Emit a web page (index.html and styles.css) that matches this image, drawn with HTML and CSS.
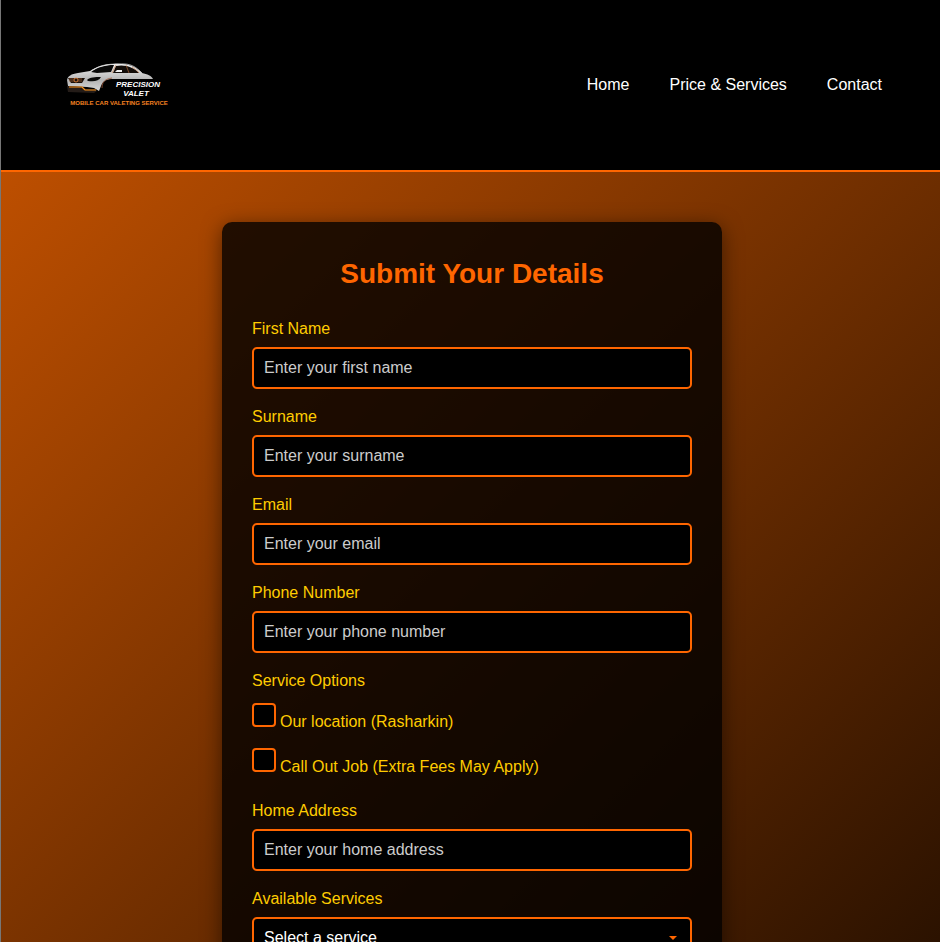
FILE: index.html
```html
<!DOCTYPE html>
<html lang="en">
<head>
<meta charset="utf-8">
<meta name="viewport" content="width=device-width, initial-scale=1">
<title>Precision Valet</title>
<link rel="stylesheet" href="styles.css">
</head>
<body>
<header class="site-header">
  <a class="logo" href="#">
    <svg viewBox="0 0 130 130" role="img" aria-label="Precision Valet">
      <defs>
        <linearGradient id="paint" x1="0" y1="0" x2="0" y2="1">
          <stop offset="0" stop-color="#f4f4f4"/>
          <stop offset=".6" stop-color="#b4b4b4"/>
          <stop offset="1" stop-color="#d8d8d8"/>
        </linearGradient>
      </defs>
      <path d="M16 60 C17 56 20 54 27 53 L39 51 C45 47 53 44 62 44 C76 43 84 46 91 53 C96 54 101 56 102 59 L66 60 C56 58 52 61 50 66 L48 71 L43 68 L36 67 L17 66 Z" fill="url(#paint)"/>
      <path d="M40 52 C47 47 54 45 63 45 L60 52 L46 53 Z" fill="#080808"/>
      <path d="M65 46 C75 44 83 48 88 53 L62 53 Z" fill="#120c08"/>
      <path d="M65 45 L61 53 M75 45 L78 53 M81 47 C84 49 87 51 88 53" fill="none" stroke="#c5733f" stroke-width=".6"/>
      <path d="M39 52 C48 45 56 44 68 44 C80 43 85 47 91 53" fill="none" stroke="#ddd" stroke-width=".7"/>
      <path d="M64 52 L66 50 L71 50 L71 52 Z" fill="#eee"/>
      <path d="M17 58 L34 58 L31 63 L20 63 Z" fill="#1b1008"/>
      <path d="M18 59 H31 M18 61 H31" stroke="#a4663c" stroke-width=".7"/>
      <circle cx="25" cy="60" r="2" fill="#17100b" stroke="#f28a3c" stroke-width=".8"/>
      <path d="M36 60 C39 57 44 57 50 57 C48 61 43 62 37 61 Z" fill="#090909"/>
      <path d="M16 66 L32 67 L35 69 L44 69 L46 71 L43 73 L17 72 Z" fill="#241c18"/>
      <path d="M18 67 H31 L34 70 H45" fill="none" stroke="#ff9418" stroke-width="1.2"/>
      <path d="M51 68 C51 62 54 59 61 58" fill="none" stroke="#985333" stroke-width=".8"/>
      <path d="M60 59 H104 V76 H53 L54 63 Z" fill="#000"/>
      <text class="logo-name" x="87" y="67">PRECISION</text>
      <text class="logo-name" x="85" y="76">VALET</text>
      <text class="logo-tagline" x="68" y="85">MOBILE CAR VALETING SERVICE</text>
    </svg>
  </a>
  <nav class="site-nav" aria-label="Main">
    <a href="#">Home</a>
    <a href="#">Price &amp; Services</a>
    <a href="#">Contact</a>
  </nav>
</header>
<main class="page">
  <form class="card">
    <h2>Submit Your Details</h2>
    <div class="field">
      <label for="first-name">First Name</label>
      <input id="first-name" type="text" placeholder="Enter your first name">
    </div>
    <div class="field">
      <label for="surname">Surname</label>
      <input id="surname" type="text" placeholder="Enter your surname">
    </div>
    <div class="field">
      <label for="email">Email</label>
      <input id="email" type="email" placeholder="Enter your email">
    </div>
    <div class="field">
      <label for="phone">Phone Number</label>
      <input id="phone" type="tel" placeholder="Enter your phone number">
    </div>
    <fieldset class="options">
      <legend>Service Options</legend>
      <div class="option">
        <input id="our-location" type="checkbox">
        <label for="our-location">Our location (Rasharkin)</label>
      </div>
      <div class="option">
        <input id="call-out" type="checkbox">
        <label for="call-out">Call Out Job (Extra Fees May Apply)</label>
      </div>
    </fieldset>
    <div class="field">
      <label for="address">Home Address</label>
      <input id="address" type="text" placeholder="Enter your home address">
    </div>
    <div class="field">
      <label for="service">Available Services</label>
      <div class="select-wrap">
        <select id="service">
          <option>Select a service</option>
        </select>
        <svg class="caret" viewBox="0 0 8 4" aria-hidden="true"><path d="M0 0 H8 L4 4 Z"/></svg>
      </div>
    </div>
  </form>
</main>
</body>
</html>
```

FILE: styles.css
```css
* {
  box-sizing: border-box;
}

body {
  margin: 0;
  min-height: 100vh;
  border-left: 1px solid #777;
  background: linear-gradient(135deg, #cc5500 0, #000 1690px);
  color: #fff;
  font: 16px/20px "Liberation Sans", Arial, sans-serif;
}

.site-header {
  display: flex;
  align-items: center;
  justify-content: space-between;
  padding: 20px 58px 20px 50px;
  background: #000;
  border-bottom: 2px solid #ff6600;
}

.logo,
.logo svg {
  display: block;
  width: 130px;
}

.logo-name {
  fill: #fff;
  font: italic bold 8px "Liberation Sans", Arial, sans-serif;
  text-anchor: middle;
}

.logo-tagline {
  fill: #f58220;
  font: bold 6px "Liberation Sans", Arial, sans-serif;
  text-anchor: middle;
}

.site-nav {
  display: flex;
  gap: 40px;
}

.site-nav a {
  color: #fff;
  text-decoration: none;
}

.page {
  padding: 50px 0 50px 3px;
}

.card {
  max-width: 500px;
  margin: 0 auto;
  padding: 30px;
  background: rgba(0, 0, 0, 0.8);
  border-radius: 10px;
  box-shadow: 0 4px 20px rgba(0, 0, 0, 0.5);
}

h2 {
  margin: 0 0 24px;
  color: #ff6600;
  font-size: 28px;
  line-height: 43px;
  text-align: center;
}

.field {
  margin-bottom: 18px;
}

.field label,
legend {
  display: block;
  margin-bottom: 8px;
  padding: 0;
  color: #ffcc00;
}

.field input,
select {
  display: block;
  width: 100%;
  height: 42px;
  padding: 0 10px;
  background: #000;
  border: 2px solid #ff6600;
  border-radius: 5px;
  color: #fff;
  font: inherit;
  appearance: none;
}

.field input::placeholder {
  color: #ccc;
  opacity: 1;
}

.options {
  margin: 0 0 8px;
  padding: 0;
  border: 0;
}

.options legend {
  margin-bottom: 12px;
}

.option {
  display: flex;
  align-items: flex-start;
  gap: 4px;
  height: 45px;
  color: #ffcc00;
}

.option input {
  width: 24px;
  height: 24px;
  margin: 0;
  background: #000;
  border: 2px solid #ff6600;
  border-radius: 4px;
  appearance: none;
}

.option label {
  padding-top: 9px;
}

.select-wrap {
  position: relative;
}

.caret {
  position: absolute;
  top: 19px;
  right: 15px;
  width: 8px;
  fill: #ff6600;
}
```
